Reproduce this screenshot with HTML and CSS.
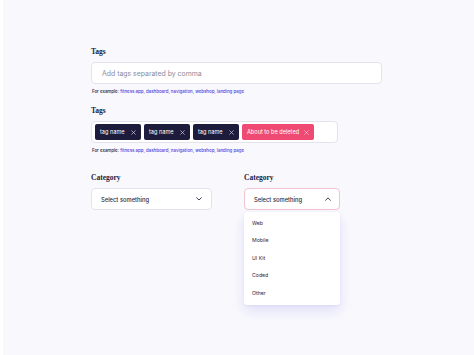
FILE: index.html
```html
<!DOCTYPE html>
<html>
<head>
<meta charset="utf-8">
<link rel="stylesheet" href="styles.css">
</head>
<body>
<main class="page">
  <section class="field">
    <div class="label">Tags</div>
    <div class="input"><span class="placeholder">Add tags separated by comma</span></div>
    <p class="helper">For example: <span class="links">fitness app, dashboard, navigation, webshop, landing page</span></p>
  </section>

  <section class="field field-second">
    <div class="label">Tags</div>
    <div class="tag-input">
      <span class="tag">tag name <svg class="x" width="5" height="5" viewBox="0 0 5 5"><path d="M0.7 0.7 L4.3 4.3 M4.3 0.7 L0.7 4.3" stroke="currentColor" stroke-width="0.7" stroke-linecap="round"/></svg></span>
      <span class="tag">tag name <svg class="x" width="5" height="5" viewBox="0 0 5 5"><path d="M0.7 0.7 L4.3 4.3 M4.3 0.7 L0.7 4.3" stroke="currentColor" stroke-width="0.7" stroke-linecap="round"/></svg></span>
      <span class="tag">tag name <svg class="x" width="5" height="5" viewBox="0 0 5 5"><path d="M0.7 0.7 L4.3 4.3 M4.3 0.7 L0.7 4.3" stroke="currentColor" stroke-width="0.7" stroke-linecap="round"/></svg></span>
      <span class="tag tag-del">About to be deleted <svg class="x" width="5" height="5" viewBox="0 0 5 5"><path d="M0.7 0.7 L4.3 4.3 M4.3 0.7 L0.7 4.3" stroke="currentColor" stroke-width="0.7" stroke-linecap="round"/></svg></span>
    </div>
    <p class="helper">For example: <span class="links">fitness app, dashboard, navigation, webshop, landing page</span></p>
  </section>

  <section class="cat-row">
    <div class="cat">
      <div class="label">Category</div>
      <div class="select">
        <span>Select something</span>
        <svg class="chev" width="6" height="4" viewBox="0 0 6 4"><path d="M0.6 0.7 L3 3 L5.4 0.7" fill="none" stroke="#2a2840" stroke-width="0.9" stroke-linecap="round" stroke-linejoin="round"/></svg>
      </div>
    </div>
    <div class="cat">
      <div class="label">Category</div>
      <div class="select select-open">
        <span>Select something</span>
        <svg class="chev" width="6" height="4" viewBox="0 0 6 4"><path d="M0.6 3.2 L3 0.9 L5.4 3.2" fill="none" stroke="#2a2840" stroke-width="0.9" stroke-linecap="round" stroke-linejoin="round"/></svg>
      </div>
      <ul class="menu">
        <li>Web</li>
        <li>Mobile</li>
        <li>UI Kit</li>
        <li>Coded</li>
        <li>Other</li>
      </ul>
    </div>
  </section>
</main>
</body>
</html>
```
FILE: styles.css
```css
html { background: #ffffff; }
body {
  margin: 0 0 0 3px;
  min-height: 355px;
  background: #f9f9fd;
  font-family: "Inter", "Noto Sans", sans-serif;
  color: #23213b;
}
.page {
  padding: 47px 0 0 88px;
}
.label {
  font-family: "Liberation Serif", "DejaVu Serif", serif;
  font-weight: bold;
  font-size: 7.5px;
  line-height: 10px;
  color: #23213b;
  margin-bottom: 5px;
}
.input {
  box-sizing: border-box;
  width: 291px;
  height: 22px;
  background: #fff;
  border: 1px solid #e3e3ee;
  border-radius: 4px;
  display: flex;
  align-items: center;
  padding-left: 10px;
}
.placeholder {
  font-size: 6.9px;
  color: #8b8a99;
}
.helper {
  margin: 5px 0 0 1px;
  font-size: 4.4px;
  line-height: 6px;
  color: #23213b;
  font-weight: 500;
}
.links { color: #4a3fdc; }
.field-second { margin-top: 11px; }
.tag-input {
  box-sizing: border-box;
  width: 247px;
  height: 22px;
  background: #fff;
  border: 1px solid #e3e3ee;
  border-radius: 4px;
  display: flex;
  align-items: center;
  gap: 3px;
  padding-left: 3px;
}
.tag {
  box-sizing: border-box;
  height: 16px;
  background: #1e1c3c;
  color: #fff;
  border-radius: 2px;
  display: flex;
  align-items: center;
  justify-content: space-between;
  width: 46px;
  padding: 0 5px;
  font-size: 5.6px;
  font-weight: 400;
}
.tag-del {
  width: 72px;
  background: #ee4a73;
}
.x {
  color: #cfcde0;
  flex: none;
}
.tag-del .x { color: #fcd2de; }
.cat-row {
  margin-top: 19px;
  display: grid;
  grid-template-columns: 121px 96px;
  column-gap: 32px;
  align-items: start;
}
.select {
  box-sizing: border-box;
  height: 22px;
  background: #fff;
  border: 1px solid #e3e3ee;
  border-radius: 4px;
  display: flex;
  align-items: center;
  justify-content: space-between;
  padding: 0 9px 0 9px;
  font-size: 5.8px;
  font-weight: 500;
  color: #2a2840;
}
.select-open {
  border-color: #f2c3d1;
  padding-right: 8px;
}
.menu {
  list-style: none;
  margin: 2px 0 0 0;
  padding: 2.5px 0 2.5px 8px;
  background: #fff;
  border-radius: 3px;
  box-shadow: 0 6px 14px rgba(110, 100, 220, 0.18), 0 1px 3px rgba(110, 100, 220, 0.08);
}
.menu li {
  height: 17.6px;
  line-height: 17.6px;
  font-size: 5.2px;
  color: #2a2840;
}
```
